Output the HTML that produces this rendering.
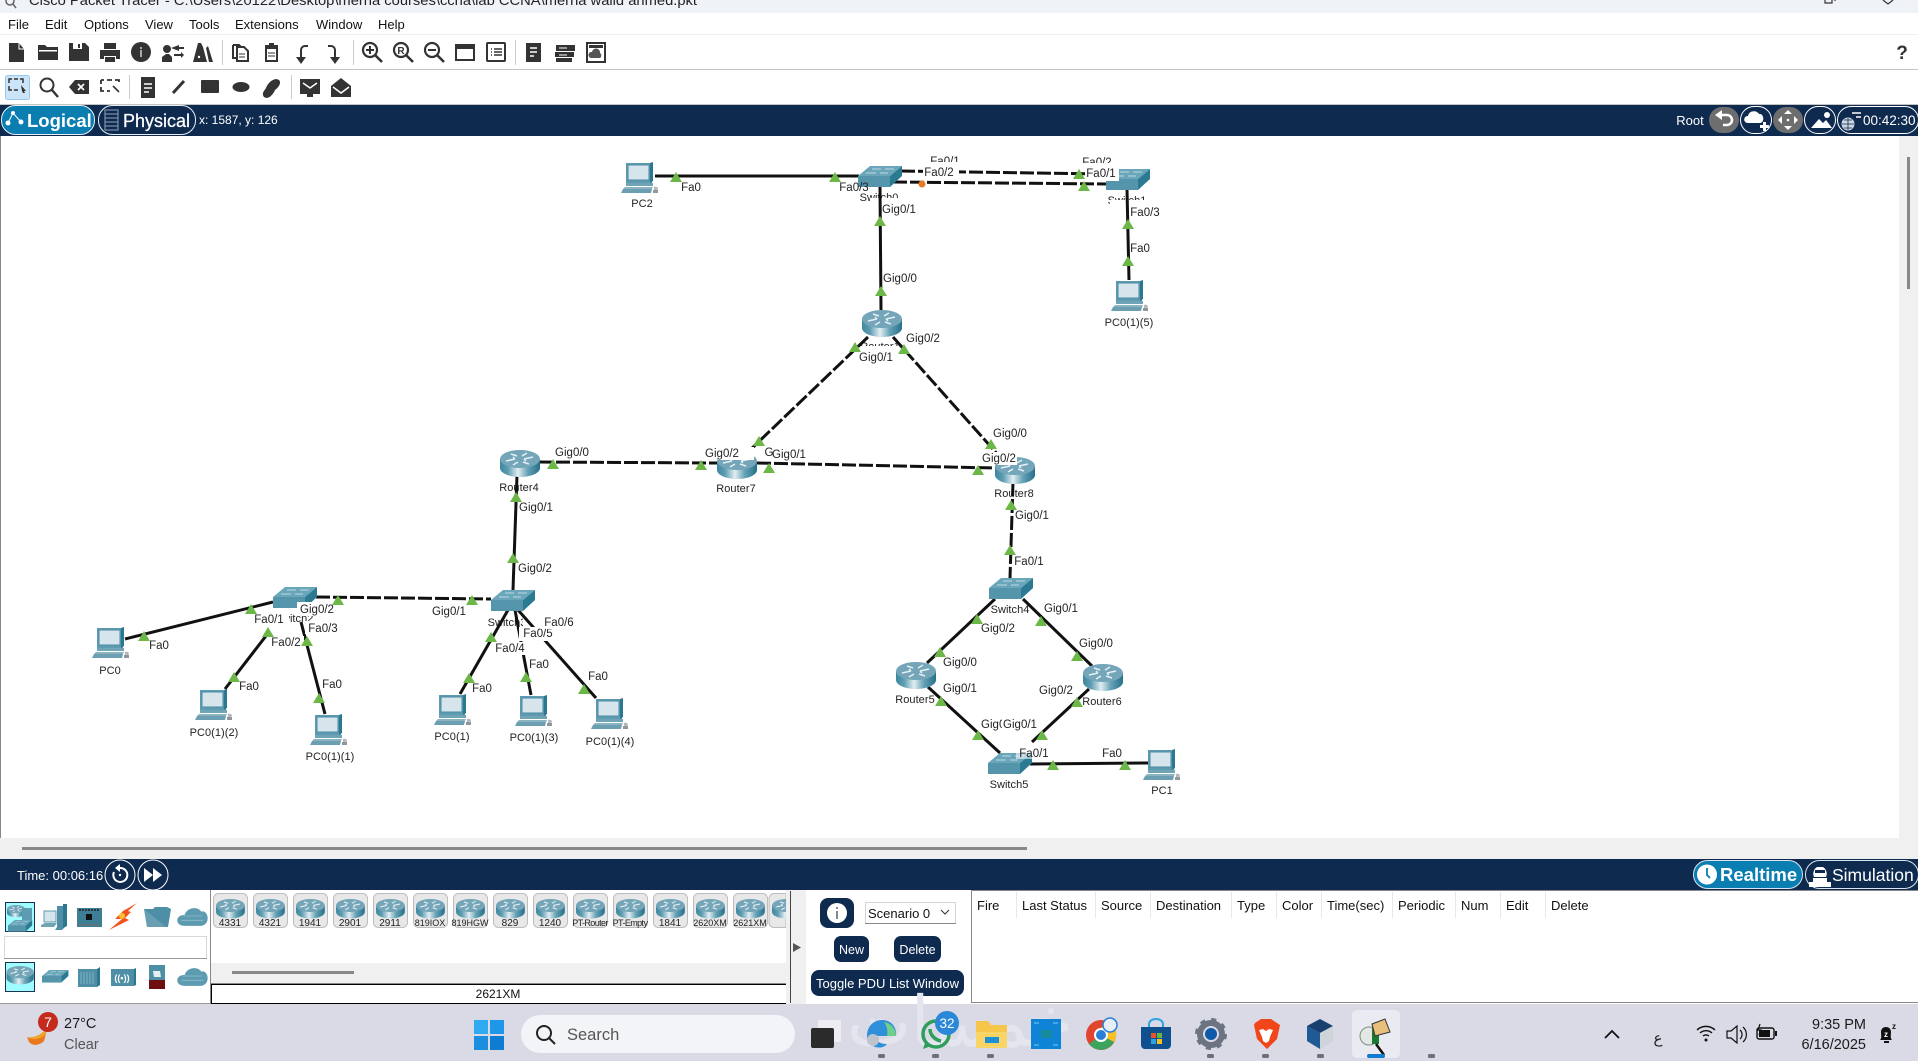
<!DOCTYPE html>
<html lang="en">
<head>
<meta charset="utf-8">
<title>Cisco Packet Tracer</title>
<style>
html,body{margin:0;padding:0;background:#fff;overflow:hidden;width:1918px;height:1061px}
svg{display:block;position:absolute;left:0;top:0}
svg svg{position:static}
text{font-family:"Liberation Sans","Noto Sans CJK SC",sans-serif}
.l{font-size:11.5px;fill:#222;text-anchor:middle}
.d{font-size:11px;fill:#222;text-anchor:middle;letter-spacing:.05px}
.m{font-size:13px;fill:#111}
.h{font-size:13px;fill:#111}
.c{font-size:10px;fill:#222;text-anchor:middle}
.n{fill:none;stroke:#111;stroke-width:3}
.k{fill:none;stroke:#111;stroke-width:3;stroke-dasharray:14 3}
.ic{fill:#333}
.ol{fill:none;stroke:#333;stroke-width:2}
</style>
</head>
<body>
<svg width="1918" height="1061" viewBox="0 0 1918 1061" xmlns="http://www.w3.org/2000/svg">
<defs>
<linearGradient id="rg" x1="0" x2="1" y1="0" y2="0">
<stop offset="0" stop-color="#3d87a0"/><stop offset=".2" stop-color="#5e9db2"/><stop offset=".45" stop-color="#e2eef2"/><stop offset=".7" stop-color="#64a0b4"/><stop offset="1" stop-color="#24718a"/>
</linearGradient>
<g id="r">
<path d="M0 9v9c0 5 9 9 20 9s20-4 20-9V9z" fill="url(#rg)"/>
<ellipse cx="20" cy="9" rx="20" ry="9" fill="#74a5b8"/>
<path d="M6 11l9-2M15 9l-2-2M33 7l-9 2M24 9l2 2M13 15l5-3M27 3l-5 3M11 4l6 2M29 14l-6-2" stroke="#e4f0f4" stroke-width="1.5" fill="none"/>
</g>
<g id="s">
<path d="M0 10L12 0H44L32 10z" fill="#6aa6ba"/>
<rect y="10" width="32" height="11" fill="#5595ac"/>
<path d="M32 10L44 0V10L32 21z" fill="#2a7a92"/>
<path d="M8 7h10M14 3h9M22 7h8M27 3h9" stroke="#bcd8e2" stroke-width="1" fill="none"/>
</g>
<g id="p">
<path d="M5 1h27l-1 20H5z" fill="#5e9bb0"/>
<path d="M29 1l3-1v19l-3 2z" fill="#2b7890"/>
<rect x="7" y="3" width="21" height="15" fill="#d6e4ec" stroke="#4b8ca3"/>
<path d="M5 21h27v3H5z" fill="#6fa3b6"/>
<path d="M4 25h28l-1 2H2z" fill="#8bb4c3"/>
<path d="M2 27h29l-1 4H0z" fill="#6c9fb2"/>
<path d="M33 25a3 3 0 0 1 4 1l-1 3h-3z" fill="#b4b9bc"/>
<path d="M32 28h5v3h-5z" fill="#8e979b"/>
</g>
<g id="tr"><path d="M-6 5L0 -5L6 5z" fill="#6db648"/></g>
<g id="cloud"><path d="M7 19c-9 0-9-10 0-10 2-7 12-8 15-3 7-2 9 13-1 13z" fill="#5d9bb1"/><path d="M5 10h18M4 14h20" stroke="#84b4c5"/></g>
</defs>

<!-- title bar -->
<rect width="1918" height="13" fill="#eff3f7"/>
<circle cx="10" cy="1" r="4" fill="none" stroke="#666" stroke-width="1.5"/><path d="M13 4l3 4" stroke="#666" stroke-width="1.5"/>
<text x="29" y="5" font-size="13.5" fill="#222" textLength="668" lengthAdjust="spacingAndGlyphs">Cisco Packet Tracer - C:\Users\20122\Desktop\merna courses\ccna\lab CCNA\merna walid ahmed.pkt</text>
<path d="M1825 0v3h7v-3M1835 0v1" fill="none" stroke="#333" stroke-width="1.2"/>
<path d="M1883 0l5 4 5-4" fill="none" stroke="#333" stroke-width="1.2"/>

<!-- menu -->
<g class="m">
<text class="m" x="8" y="29">File</text><text class="m" x="45" y="29">Edit</text><text class="m" x="84" y="29">Options</text><text class="m" x="145" y="29">View</text><text class="m" x="189" y="29">Tools</text><text class="m" x="235" y="29">Extensions</text><text class="m" x="316" y="29">Window</text><text class="m" x="378" y="29">Help</text>
</g>
<rect y="34" width="1918" height="1" fill="#f0f0f0"/>

<!-- toolbar 1 -->
<g>
<path class="ic" d="M9 43h10l5 6v13H9z"/><path d="M19 43v6h5" fill="none" stroke="#fff"/>
<path class="ic" d="M38 45h7l2 2h11v13H38z"/><rect x="39" y="50" width="18" height="1.5" fill="#fff"/>
<path class="ic" d="M69 43h16l4 4v14H69z"/><rect x="73" y="43" width="9" height="6" fill="#fff"/><rect x="78" y="44" width="2" height="4" fill="#333"/>
<path class="ic" d="M104 43h12v6h-12zM100 50h20v9h-4v-3h-12v3h-4zM105 57h10v5h-10z"/>
<circle class="ic" cx="141" cy="52" r="10"/><rect x="140" y="50" width="2" height="7" fill="#aaa"/><rect x="140" y="47" width="2" height="2" fill="#aaa"/>
<path class="ic" d="M167 45a4 4 0 1 1 0 8 4 4 0 0 1 0-8zM162 62v-5l4-3h3l3 3v5zM171 48l8-3v2h5v2h-5v2zM174 54h7v-2l3 3-3 3v-2h-7z"/>
<path class="ic" d="M198 43h3l2 4 4 15h-14zM208 46l5 16h-4l-3-14z"/><circle cx="199" cy="57" r="1.2" fill="#fff"/>
<rect x="222" y="40" width="1" height="25" fill="#ccc"/>
<path class="ol" d="M237 47h7l4 4v10h-11z" stroke-width="1.6"/><path class="ol" d="M233 45h6l2 2M233 45v13h4" stroke-width="1.6"/><path d="M239 54h6M239 57h6" stroke="#333"/>
<path class="ic" d="M265 45h4v-2h5v2h4v17h-13z"/><rect x="267" y="49" width="9" height="11" fill="#fff"/><path d="M268 53h7M268 56h7" stroke="#333"/>
<path class="ol" d="M301 60V50a4 4 0 0 1 4-4h3" stroke-width="2"/><path class="ic" d="M296 57h10l-5 7z"/>
<path class="ol" d="M335 60V50a4 4 0 0 0-4-4h-3" stroke-width="2"/><path class="ic" d="M330 57h10l-5 7z"/>
<rect x="353" y="40" width="1" height="25" fill="#ccc"/>
<g fill="none" stroke="#333"><circle cx="370" cy="50" r="7" stroke-width="2.2"/><path d="M375 55l7 7" stroke-width="2.6"/><path d="M366 50h8M370 46v8" stroke-width="2"/></g>
<g fill="none" stroke="#333"><circle cx="401" cy="50" r="7" stroke-width="2.2"/><path d="M406 55l7 7" stroke-width="2.6"/></g><text x="401" y="54" font-size="10" font-weight="bold" text-anchor="middle" fill="#333">R</text>
<g fill="none" stroke="#333"><circle cx="432" cy="50" r="7" stroke-width="2.2"/><path d="M437 55l7 7" stroke-width="2.6"/><path d="M428 50h8" stroke-width="2"/></g>
<rect x="456" y="45" width="18" height="15" fill="none" stroke="#333" stroke-width="2"/><rect x="456" y="45" width="18" height="4" fill="#333"/>
<rect x="487" y="43" width="18" height="18" rx="1" fill="none" stroke="#333" stroke-width="2"/><path d="M491 49h1M494 49h8M491 52h1M494 52h8M491 55h1M494 55h8" stroke="#333" stroke-width="1.5"/>
<rect x="515" y="40" width="1" height="25" fill="#ccc"/>
<rect x="526" y="43" width="15" height="19" fill="#333"/><path d="M530 48h7M530 52h7M530 56h4" stroke="#fff" stroke-width="1.5"/>
<path class="ic" d="M556 45h19v6h-19zM555 52h19v5h-19zM556 58h16v4h-16z"/><path d="M559 48h8M559 55h8" stroke="#fff"/>
<rect x="587" y="43" width="18" height="19" fill="none" stroke="#333" stroke-width="2"/><rect x="589" y="45" width="14" height="3" fill="#333"/><path d="M591 58a3 3 0 0 1 1-6 4 4 0 0 1 8 1 3 3 0 0 1 0 5z" fill="#555"/>
</g>
<text x="1902" y="59" font-size="19" font-weight="bold" text-anchor="middle" fill="#333">?</text>
<rect y="69" width="1918" height="1" fill="#c4c4c4"/>

<!-- toolbar 2 -->
<rect x="5.500" y="75.500" width="24" height="24" rx="2" fill="#cce4f7" stroke="#99c9ef"/>
<path d="M9 83v-4h3M14 79h4M20 79h3v4M9 86v4h3M14 90h4" fill="none" stroke="#333" stroke-width="1.5"/><path d="M21 85l5 6-2 0 1 2-2 0-1-2z" fill="#333"/>
<g fill="none" stroke="#333"><circle cx="47" cy="85" r="6.500" stroke-width="2"/><path d="M52 90l6 7" stroke-width="2.4"/></g>
<path class="ic" d="M69 87l6-7h14v14h-14z"/><path d="M78 84l6 6M84 84l-6 6" stroke="#fff" stroke-width="1.6"/>
<path d="M101 80h3M107 80h5M115 80h4v2M101 80v4M101 87v4h3M107 91h3" fill="none" stroke="#333" stroke-width="1.8"/><path d="M113 86l6 6" stroke="#333" stroke-width="1.6"/>
<rect x="129" y="75" width="1" height="24" fill="#ccc"/>
<rect x="141" y="77" width="14" height="21" fill="#333"/><path d="M144 84h8M144 88h8M144 92h5" stroke="#fff" stroke-width="1.4"/>
<path d="M173 93l11-12" stroke="#333" stroke-width="3"/>
<rect x="201" y="80" width="18" height="13" rx="1" fill="#333"/>
<ellipse cx="241" cy="87" rx="8.500" ry="5" fill="#333"/>
<path d="M264 97c-3-4 1-7 2-9 2-6 9-11 13-8 3 3-1 8-4 10-2 5-7 10-11 7z" fill="#333"/>
<rect x="291" y="75" width="1" height="24" fill="#ccc"/>
<path class="ic" d="M300 79h20v15h-7v3h-6v-3h-7z"/><path d="M303 83l7 5 7-5" fill="none" stroke="#fff" stroke-width="1.5"/>
<path class="ic" d="M331 86l10-8 10 8v11h-20z"/><path d="M333 87l8 6 8-6" fill="none" stroke="#fff" stroke-width="1.5"/>
<rect y="104" width="1918" height="1" fill="#c4c4c4"/>

<!-- navy bar top -->
<rect y="105" width="1918" height="31" fill="#0f2a4f"/>
<rect x="1.500" y="105.500" width="93" height="29" rx="14" fill="#0a7db1" stroke="#e8f0f6"/>
<circle cx="8" cy="123" r="2.500" fill="#fff"/><circle cx="13" cy="113" r="2" fill="#fff"/><circle cx="21" cy="122" r="2.500" fill="#fff"/><path d="M8 123l5-10 8 9" fill="none" stroke="#fff"/>
<text x="27" y="127" font-size="18.500" font-weight="bold" fill="#fff">Logical</text>
<rect x="98.500" y="105.500" width="97" height="29" rx="14" fill="#0f2a4f" stroke="#e8f0f6"/>
<rect x="105" y="110" width="13" height="20" fill="none" stroke="#8fa3bc"/><path d="M105 114h13M105 118h13M105 122h13M105 126h13" stroke="#8fa3bc"/>
<text x="123" y="127" font-size="18" fill="#fff" stroke="#fff" stroke-width=".25">Physical</text>
<text x="199" y="124" font-size="12" fill="#fff">x: 1587, y: 126</text>
<text x="1690" y="125" font-size="13" fill="#fff" text-anchor="middle">Root</text>
<rect x="1709" y="107" width="30" height="26" rx="13" fill="#6e6e6e"/>
<path d="M1720 115h7a5 5 0 0 1 0 10h-4" fill="none" stroke="#fff" stroke-width="2.500"/><path d="M1722 110v10l-7-5z" fill="#fff"/>
<rect x="1740.500" y="106.500" width="31" height="27" rx="13.500" fill="none" stroke="#fff"/>
<path d="M1748 123c-5 0-5-7 0-7 1-6 9-6 11-2 5-1 6 9 1 9z" fill="#fff"/><path d="M1763 122h3v3h3v3h-3v3h-3v-3h-3v-3h3z" fill="#fff"/>
<rect x="1773" y="107" width="30" height="26" rx="13" fill="#6e6e6e"/>
<path d="M1788 110l4 4h-8zM1788 130l4-4h-8zM1778 120l4-4v8zM1798 120l-4-4v8z" fill="#fff"/><circle cx="1788" cy="120" r="1.300" fill="#fff"/>
<rect x="1804.500" y="106.500" width="31" height="27" rx="13.500" fill="none" stroke="#fff"/>
<path d="M1811 128l8-9 4 4 3-3 6 8z" fill="#fff"/><circle cx="1827" cy="115" r="3" fill="#fff"/>
<rect x="1837.500" y="106.500" width="81" height="27" rx="13.500" fill="none" stroke="#fff"/>
<circle cx="1848" cy="124" r="6.500" fill="#cdd6e0"/><path d="M1842 124h12M1848 118v12M1844 120h8M1844 128h8" stroke="#0f2a4f" stroke-width=".8"/>
<path d="M1852 113h9M1856 117h5" stroke="#fff" stroke-width="1.500"/>
<text x="1863" y="125" font-size="13.500" fill="#fff">00:42:30</text>

<!-- canvas -->
<rect x="0" y="136" width="1899" height="702" fill="#fff"/>
<rect x="0" y="136" width="1" height="704" fill="#888"/>
<rect x="1899" y="136" width="19" height="723" fill="#f0f0f0"/>
<rect x="1907" y="157" width="3" height="132" fill="#888"/>
<rect x="0" y="838" width="1899" height="21" fill="#f0f0f0"/>
<rect x="22" y="847" width="1005" height="3" fill="#888"/>

<!-- device labels -->
<g class="d">
<text class="d" x="642" y="207">PC2</text>
<text class="d" x="879" y="201">Switch0</text>
<text class="d" x="1127" y="204">Switch1</text>
<text class="d" x="1129" y="326">PC0(1)(5)</text>
<text class="d" x="880" y="350">Router1</text>
<text class="d" x="519" y="491">Router4</text>
<text class="d" x="736" y="492">Router7</text>
<text class="d" x="1014" y="497">Router8</text>
<text class="d" x="1010" y="613">Switch4</text>
<text class="d" x="915" y="703">Router5</text>
<text class="d" x="1102" y="705">Router6</text>
<text class="d" x="1009" y="788">Switch5</text>
<text class="d" x="1162" y="794">PC1</text>
<text class="d" x="110" y="674">PC0</text>
<text class="d" x="214" y="736">PC0(1)(2)</text>
<text class="d" x="330" y="760">PC0(1)(1)</text>
<text class="d" x="452" y="740">PC0(1)</text>
<text class="d" x="534" y="741">PC0(1)(3)</text>
<text class="d" x="610" y="745">PC0(1)(4)</text>
<text class="d" x="294" y="622">Switch2</text>
<svg x="485" y="610" width="38" height="20"><text class="d" x="22" y="16">Switch3</text></svg>
</g>
<rect x="870" y="198" width="62" height="19" fill="#fff"/>
<rect x="1110" y="200" width="40" height="15" fill="#fff"/>
<rect x="858" y="346" width="42" height="20" fill="#fff"/>

<!-- links -->
<line class="n" x1="655" y1="176" x2="859" y2="176"/>
<line class="k" x1="901" y1="171" x2="1106" y2="174"/>
<line class="k" x1="893" y1="182" x2="1107" y2="184"/>
<line class="n" x1="880" y1="187" x2="881" y2="310"/>
<line class="n" x1="1127" y1="189" x2="1129" y2="280"/>
<line class="k" x1="868" y1="337" x2="748" y2="452" stroke-dasharray="12 4"/>
<line class="k" x1="893" y1="337" x2="1000" y2="457" stroke-dasharray="12 4"/>
<line class="k" x1="539" y1="462" x2="717" y2="463"/>
<line class="k" x1="757" y1="463" x2="995" y2="468"/>
<line class="n" x1="517" y1="475" x2="513" y2="590"/>
<line class="k" x1="1013" y1="482" x2="1010" y2="578" stroke-dasharray="18 3"/>
<line class="n" x1="125" y1="639" x2="273" y2="602"/>
<line class="n" x1="225" y1="689" x2="269" y2="632"/>
<line class="n" x1="325" y1="714" x2="301" y2="622"/>
<line class="k" x1="316" y1="597" x2="491" y2="599"/>
<line class="n" x1="460" y1="694" x2="508" y2="610"/>
<line class="n" x1="531" y1="695" x2="515" y2="610"/>
<line class="n" x1="596" y1="698" x2="518" y2="610"/>
<line class="n" x1="995" y1="599" x2="927" y2="663"/>
<line class="n" x1="1023" y1="599" x2="1092" y2="666"/>
<line class="n" x1="928" y1="687" x2="1000" y2="753"/>
<line class="n" x1="1089" y1="689" x2="1032" y2="742"/>
<line class="n" x1="1030" y1="764" x2="1148" y2="763"/>

<!-- devices -->
<use href="#p" x="621" y="162"/>
<use href="#s" x="858" y="166"/>
<use href="#s" x="1106" y="169"/>
<use href="#p" x="1111" y="280"/>
<use href="#r" x="862" y="310"/>
<use href="#r" x="500" y="450"/>
<use href="#r" x="717" y="452"/>
<use href="#r" x="995" y="457"/>
<use href="#s" x="491" y="590"/>
<use href="#s" x="273" y="587"/>
<use href="#s" x="989" y="578"/>
<use href="#r" x="896" y="662"/>
<use href="#r" x="1083" y="664"/>
<use href="#s" x="988" y="753"/>
<use href="#p" x="1143" y="749"/>
<use href="#p" x="92" y="627"/>
<use href="#p" x="195" y="689"/>
<use href="#p" x="310" y="714"/>
<use href="#p" x="434" y="694"/>
<use href="#p" x="515" y="695"/>
<use href="#p" x="591" y="698"/>

<!-- white label backgrounds -->
<g fill="#fff">
<rect x="923" y="162" width="36" height="17"/>
<rect x="1085" y="163" width="34" height="18"/>
<rect x="718" y="447" width="36" height="13"/>
<rect x="981" y="452" width="36" height="13"/>
<rect x="252" y="612" width="37" height="14"/>
<rect x="297" y="602" width="37" height="14"/>
<rect x="305" y="621" width="36" height="13"/>
<rect x="268" y="636" width="36" height="12"/>
<rect x="519" y="627" width="36" height="14"/>
<rect x="540" y="616" width="38" height="13"/>
<rect x="492" y="642" width="36" height="13"/>
<rect x="1016" y="747" width="36" height="12" opacity=".55"/>
<rect x="1098" y="757" width="26" height="3" opacity=".6"/>
</g>

<!-- link lights -->
<g>
<use href="#tr" x="676" y="177"/><use href="#tr" x="835" y="177"/>
<use href="#tr" x="1079" y="174"/><use href="#tr" x="1084" y="186"/>
<use href="#tr" x="880" y="221"/><use href="#tr" x="881" y="291"/>
<use href="#tr" x="1128" y="224"/><use href="#tr" x="1128" y="261"/>
<use href="#tr" x="855" y="347"/><use href="#tr" x="904" y="349"/>
<use href="#tr" x="553" y="464"/><use href="#tr" x="701" y="465"/>
<use href="#tr" x="769" y="468"/><use href="#tr" x="978" y="470"/>
<use href="#tr" x="991" y="444"/><use href="#tr" x="759" y="441"/>
<use href="#tr" x="516" y="497"/><use href="#tr" x="513" y="558"/>
<use href="#tr" x="1011" y="505"/><use href="#tr" x="1010" y="550"/>
<use href="#tr" x="144" y="636"/><use href="#tr" x="251" y="609"/>
<use href="#tr" x="234" y="677"/><use href="#tr" x="268" y="632"/>
<use href="#tr" x="307" y="641"/><use href="#tr" x="319" y="698"/>
<use href="#tr" x="338" y="600"/><use href="#tr" x="472" y="600"/>
<use href="#tr" x="491" y="637"/><use href="#tr" x="469" y="678"/>
<use href="#tr" x="526" y="677"/><use href="#tr" x="584" y="689"/>
<use href="#tr" x="977" y="619"/><use href="#tr" x="940" y="652"/>
<use href="#tr" x="1041" y="621"/><use href="#tr" x="1077" y="656"/>
<use href="#tr" x="941" y="701"/><use href="#tr" x="978" y="735"/>
<use href="#tr" x="1077" y="702"/><use href="#tr" x="1042" y="735"/>
<use href="#tr" x="1053" y="765"/><use href="#tr" x="1125" y="765"/>
</g>
<circle cx="922" cy="184" r="3.500" fill="#e97a22"/>

<!-- port labels -->
<g>
<text class="l" x="691" y="191">Fa0</text>
<text class="l" x="854" y="191">Fa0/3</text>
<svg x="925" y="150" width="40" height="12"><text class="l" x="20" y="15">Fa0/1</text></svg>
<text class="l" x="939" y="176">Fa0/2</text>
<svg x="1077" y="152" width="40" height="11"><text class="l" x="20" y="14">Fa0/2</text></svg>
<text class="l" x="1101" y="177">Fa0/1</text>
<text class="l" x="899" y="213">Gig0/1</text>
<text class="l" x="900" y="282">Gig0/0</text>
<text class="l" x="1145" y="216">Fa0/3</text>
<text class="l" x="1140" y="252">Fa0</text>
<text class="l" x="923" y="342">Gig0/2</text>
<text class="l" x="876" y="361">Gig0/1</text>
<text class="l" x="572" y="456">Gig0/0</text>
<text class="l" x="722" y="457">Gig0/2</text>
<text class="l" x="769" y="456">G</text>
<text class="l" x="789" y="458">Gig0/1</text>
<text class="l" x="1010" y="437">Gig0/0</text>
<text class="l" x="999" y="462">Gig0/2</text>
<text class="l" x="536" y="511">Gig0/1</text>
<text class="l" x="535" y="572">Gig0/2</text>
<text class="l" x="1032" y="519">Gig0/1</text>
<text class="l" x="1029" y="565">Fa0/1</text>
<text class="l" x="159" y="649">Fa0</text>
<text class="l" x="269" y="623">Fa0/1</text>
<text class="l" x="317" y="613">Gig0/2</text>
<text class="l" x="323" y="632">Fa0/3</text>
<text class="l" x="286" y="646">Fa0/2</text>
<text class="l" x="249" y="690">Fa0</text>
<text class="l" x="332" y="688">Fa0</text>
<text class="l" x="449" y="615">Gig0/1</text>
<text class="l" x="538" y="637">Fa0/5</text>
<rect x="540" y="616" width="38" height="13" fill="#fff"/>
<text class="l" x="559" y="626">Fa0/6</text>
<text class="l" x="510" y="652">Fa0/4</text>
<text class="l" x="482" y="692">Fa0</text>
<text class="l" x="539" y="668">Fa0</text>
<text class="l" x="598" y="680">Fa0</text>
<text class="l" x="998" y="632">Gig0/2</text>
<text class="l" x="960" y="666">Gig0/0</text>
<text class="l" x="960" y="692">Gig0/1</text>
<text class="l" x="1061" y="612">Gig0/1</text>
<text class="l" x="1096" y="647">Gig0/0</text>
<text class="l" x="1056" y="694">Gig0/2</text>
<text class="l" x="998" y="728">Gig0/1</text>
<rect x="1002" y="716" width="36" height="16" fill="#fff"/>
<text class="l" x="1020" y="728">Gig0/1</text>
<text class="l" x="1034" y="757">Fa0/1</text>
<text class="l" x="1112" y="757">Fa0</text>
</g>

<!-- navy bar bottom -->
<rect y="859" width="1918" height="31" fill="#0f2a4f"/>
<text x="17" y="880" font-size="13" fill="#fff">Time: 00:06:16</text>
<circle cx="120" cy="875" r="15" fill="none" stroke="#fff"/>
<path d="M114 872a7 7 0 1 0 6-4h-3" fill="none" stroke="#fff" stroke-width="2"/><path d="M120 864v8l-5-4z" fill="#fff"/><circle cx="120" cy="875" r="1.200" fill="#fff"/>
<circle cx="153" cy="875" r="15" fill="none" stroke="#fff"/>
<path d="M144 868l9 7-9 7zM153 868l9 7-9 7z" fill="#fff"/>
<rect x="1693.500" y="860.500" width="109" height="28" rx="14" fill="#0a7db1" stroke="#d8e4ee"/>
<circle cx="1707" cy="874.500" r="10" fill="#fff"/><path d="M1707 868v7l3 3" fill="none" stroke="#0a7db1" stroke-width="1.800"/>
<text x="1720" y="881" font-size="18.500" font-weight="bold" fill="#fff">Realtime</text>
<rect x="1805.500" y="860.500" width="113" height="28" rx="14" fill="#0f2a4f" stroke="#d8e4ee"/>
<path d="M1814 877a8 8 0 0 1 3-10h6a8 8 0 0 1 3 10z" fill="#fff"/><rect x="1815" y="870" width="10" height="3" fill="#0f2a4f"/><path d="M1809 882h4v-4h14v4h4v5h-22z" fill="#fff"/>
<text x="1832" y="881" font-size="17.500" fill="#fff">Simulation</text>

<!-- bottom panel -->
<rect y="890" width="1918" height="114" fill="#fff"/>
<rect x="5.500" y="902.500" width="29" height="29" fill="#9ffcff" stroke="#1a3350"/>
<use href="#r" transform="translate(7 905) scale(.45)"/>
<use href="#s" transform="translate(8 920) scale(.55)"/>
<rect x="22" y="908" width="10" height="12" fill="#5d9bb1"/>
<g transform="translate(41 903)"><path d="M16 3h9v20l-4 4h-7l2-3z" fill="#4e8fa7"/><path d="M22 1l4 0v22l-4 2z" fill="#2b7890"/><rect x="3" y="8" width="12" height="11" fill="#d6e4ec" stroke="#5e9bb0"/><path d="M0 22l4-2h12l-3 4H0z" fill="#6fa3b6"/></g>
<rect x="77" y="908" width="25" height="19" fill="#3e7f96"/><rect x="86" y="914" width="6" height="6" fill="#111"/><path d="M79 910h21" stroke="#222" stroke-width="1.500" stroke-dasharray="2 1"/><path d="M79 925h21" stroke="#b4553a" stroke-dasharray="2 2"/>
<path d="M137 903l-14 8-8 8 7 0-13 11 20-10 -4-2 6-6-3-1z" fill="#f4511e"/><circle cx="122" cy="916" r="3" fill="#f7c12d"/>
<path d="M144 909h9l2-2h12l4 2-3 18h-21z" fill="#4e8fa7"/><path d="M144 909l22 18h-19z" fill="#7aaabb" opacity=".6"/>
<use href="#cloud" transform="translate(177 905) scale(1.100)"/>
<rect x="4.500" y="936.500" width="202" height="22" fill="#fff" stroke="#d8d8d8"/>
<rect x="4" y="958" width="203" height="1" fill="#999"/>
<rect x="5.500" y="962.500" width="29" height="29" fill="#9ffcff" stroke="#1a3350"/>
<use href="#r" transform="translate(6.500 966) scale(.68)"/>
<use href="#s" transform="translate(42 970) scale(.6)"/>
<rect x="78" y="969" width="19" height="18" fill="#4e8fa7"/><path d="M97 969l3-2v18l-3 2z" fill="#2b7890"/><path d="M81 972v12M84 972v12M87 972v12M90 972v12M93 972v12" stroke="#7fb0c1"/>
<rect x="111" y="969" width="23" height="17" fill="#4e8fa7"/><path d="M134 969l2-1v17l-2 1z" fill="#2b7890"/><text x="122" y="981" font-size="9" fill="#fff" text-anchor="middle" font-weight="bold">((•))</text>
<rect x="149" y="965" width="16" height="15" fill="#4e8fa7"/><rect x="149" y="980" width="16" height="9" fill="#6d0f10"/><path d="M153 971l7 0 1 6h-7z" fill="#e6eef2"/>
<use href="#cloud" transform="translate(177 965) scale(1.100)"/>
<rect x="0" y="1003" width="210" height="1" fill="#999"/>

<rect x="210" y="890" width="1" height="114" fill="#888"/>
<rect x="211" y="963" width="575" height="20" fill="#f0f0f0"/>
<rect x="232" y="971" width="122" height="3" fill="#888"/>
<rect x="211" y="983" width="575" height="1" fill="#888"/>
<rect x="211.500" y="984.500" width="575" height="19" fill="#fff" stroke="#000"/>
<text x="498" y="998" font-size="12" fill="#111" text-anchor="middle">2621XM</text>

<g fill="#e8e8e8" stroke="#bdbdbd">
<rect x="213.500" y="893.500" width="34" height="34" rx="5"/><rect x="253.500" y="893.500" width="34" height="34" rx="5"/><rect x="293.500" y="893.500" width="34" height="34" rx="5"/><rect x="333.500" y="893.500" width="34" height="34" rx="5"/><rect x="373.500" y="893.500" width="34" height="34" rx="5"/><rect x="413.500" y="893.500" width="34" height="34" rx="5"/><rect x="453.500" y="893.500" width="34" height="34" rx="5"/><rect x="493.500" y="893.500" width="34" height="34" rx="5"/><rect x="533.500" y="893.500" width="34" height="34" rx="5"/><rect x="573.500" y="893.500" width="34" height="34" rx="5"/><rect x="613.500" y="893.500" width="34" height="34" rx="5"/><rect x="653.500" y="893.500" width="34" height="34" rx="5"/><rect x="693.500" y="893.500" width="34" height="34" rx="5"/><rect x="733.500" y="893.500" width="34" height="34" rx="5"/><path d="M786 893.500h-12a5 5 0 0 0-5 5v24a5 5 0 0 0 5 5h12z" />
</g>
<g>
<use href="#r" transform="translate(216 899) scale(.72)"/><use href="#r" transform="translate(256 899) scale(.72)"/><use href="#r" transform="translate(296 899) scale(.72)"/><use href="#r" transform="translate(336 899) scale(.72)"/><use href="#r" transform="translate(376 899) scale(.72)"/><use href="#r" transform="translate(416 899) scale(.72)"/><use href="#r" transform="translate(456 899) scale(.72)"/><use href="#r" transform="translate(496 899) scale(.72)"/><use href="#r" transform="translate(536 899) scale(.72)"/><use href="#r" transform="translate(576 899) scale(.72)"/><use href="#r" transform="translate(616 899) scale(.72)"/><use href="#r" transform="translate(656 899) scale(.72)"/><use href="#r" transform="translate(696 899) scale(.72)"/><use href="#r" transform="translate(736 899) scale(.72)"/>
<svg x="770" y="899" width="16" height="20"><use href="#r" transform="translate(2 0) scale(.72)"/></svg>
</g>
<g>
<text class="c" x="230" y="926">4331</text><text class="c" x="270" y="926">4321</text><text class="c" x="310" y="926">1941</text><text class="c" x="350" y="926">2901</text><text class="c" x="390" y="926">2911</text><text class="c" x="430" y="926" style="font-size:9px">819IOX</text><text class="c" x="470" y="926" style="font-size:9px">819HGW</text><text class="c" x="510" y="926">829</text><text class="c" x="550" y="926">1240</text><text class="c" x="590" y="926" style="font-size:9px;letter-spacing:-.6px">PT-Router</text><text class="c" x="630" y="926" style="font-size:9px;letter-spacing:-.6px">PT-Empty</text><text class="c" x="670" y="926">1841</text><text class="c" x="710" y="926" style="font-size:9px">2620XM</text><text class="c" x="750" y="926" style="font-size:9px">2621XM</text>
</g>

<!-- splitter -->
<rect x="786" y="890" width="20" height="114" fill="#f0f0f0"/>
<rect x="790" y="891" width="1" height="112" fill="#444"/>
<path d="M793 943l8 4.500-8 4.500z" fill="#555"/>

<!-- middle -->
<rect x="806" y="890" width="165" height="114" fill="#fff"/>
<rect x="820" y="898" width="34" height="30" rx="8" fill="#0f2a4f"/>
<circle cx="837" cy="913" r="10" fill="#fff"/><rect x="836" y="911" width="2" height="8" fill="#888"/><rect x="836" y="907" width="2" height="2" fill="#888"/>
<rect x="865.500" y="902.500" width="90" height="21" fill="#fff" stroke="#d5d5d5"/><rect x="865" y="923" width="91" height="1" fill="#888"/>
<text x="868" y="918" font-size="13" fill="#111">Scenario 0</text>
<path d="M941 910l4 4 4-4" fill="none" stroke="#333"/>
<rect x="834" y="936" width="35" height="26" rx="7" fill="#0f2a4f"/><text x="851.500" y="954" font-size="12.500" fill="#fff" text-anchor="middle">New</text>
<rect x="894" y="936" width="47" height="26" rx="7" fill="#0f2a4f"/><text x="917.500" y="954" font-size="12.500" fill="#fff" text-anchor="middle">Delete</text>
<rect x="811" y="970" width="153" height="26" rx="8" fill="#0f2a4f"/><text x="887.500" y="988" font-size="13" fill="#fff" text-anchor="middle" textLength="143" lengthAdjust="spacingAndGlyphs">Toggle PDU List Window</text>

<!-- PDU table -->
<rect x="971.500" y="890.500" width="947" height="112" fill="#fff" stroke="#888"/>
<g fill="#e8e8e8">
<rect x="1016" y="892" width="1" height="26"/><rect x="1095" y="892" width="1" height="26"/><rect x="1150" y="892" width="1" height="26"/><rect x="1231" y="892" width="1" height="26"/><rect x="1276" y="892" width="1" height="26"/><rect x="1321" y="892" width="1" height="26"/><rect x="1392" y="892" width="1" height="26"/><rect x="1455" y="892" width="1" height="26"/><rect x="1500" y="892" width="1" height="26"/><rect x="1545" y="892" width="1" height="26"/>
</g>
<g>
<text class="h" x="977" y="910">Fire</text><text class="h" x="1022" y="910">Last Status</text><text class="h" x="1101" y="910">Source</text><text class="h" x="1156" y="910">Destination</text><text class="h" x="1237" y="910">Type</text><text class="h" x="1282" y="910">Color</text><text class="h" x="1327" y="910">Time(sec)</text><text class="h" x="1398" y="910">Periodic</text><text class="h" x="1461" y="910">Num</text><text class="h" x="1506" y="910">Edit</text><text class="h" x="1551" y="910">Delete</text>
</g>

<!-- taskbar -->
<rect y="1004" width="1918" height="57" fill="#d9dae6"/>
<path d="M47 1028c0 9-6 14-11 13-4 0-6-2-8-4 6 1 13-2 19-9z" fill="#f0a22c"/><path d="M27 1037c6 4 14 2 19-3l-2 7c-5 5-12 5-15 1z" fill="#e8791c"/>
<circle cx="48" cy="1022" r="10" fill="#c42b1c"/><text x="48" y="1027" font-size="14" fill="#fff" text-anchor="middle">7</text>
<text x="64" y="1028" font-size="14.500" fill="#1a1a1a">27°C</text>
<text x="64" y="1049" font-size="14.500" fill="#555">Clear</text>
<g>
<rect x="474" y="1020" width="14" height="14" fill="#2eaaf0"/><rect x="490" y="1020" width="14" height="14" fill="#1e97e8"/><rect x="474" y="1036" width="14" height="14" fill="#1c8ee0"/><rect x="490" y="1036" width="14" height="14" fill="#0f7cd4"/>
</g>
<rect x="521" y="1015" width="274" height="38" rx="19" fill="#f3f4f7"/>
<circle cx="544" cy="1033" r="7" fill="none" stroke="#222" stroke-width="2"/><path d="M549 1038l6 6" stroke="#222" stroke-width="2"/>
<text x="567" y="1040" font-size="16.500" fill="#555">Search</text>

<text x="960" y="1046" font-size="70" fill="#e4e5ee" text-anchor="middle" font-family="'DejaVu Sans',sans-serif" textLength="226" lengthAdjust="spacingAndGlyphs">خمسات</text>
<rect x="818" y="1020" width="23" height="22" rx="2" fill="#ededf3"/><rect x="811" y="1028" width="23" height="20" rx="2" fill="#2b2b2b"/>
<!-- edge -->
<path d="M867 1036c0-10 7-16 15-16 9 0 15 7 14 16h-21c0 4 4 8 12 8-3 4-8 4-12 3-5-2-8-6-8-11z" fill="#2f8fd8"/><path d="M884 1022c7 1 12 7 12 14h-9c1-5 0-10-3-14z" fill="#6fcf8a"/><circle cx="873" cy="1040" r="6" fill="#bfc3cc"/>
<!-- whatsapp -->
<circle cx="936" cy="1034" r="13" fill="none" stroke="#2e9e5b" stroke-width="3.500"/><path d="M923 1049l3-9 5 6z" fill="#2e9e5b"/><path d="M930 1029c0 6 5 11 11 12" fill="none" stroke="#2e9e5b" stroke-width="3.500"/>
<circle cx="947" cy="1023" r="12" fill="#2b88d8"/><text x="947" y="1028" font-size="13.500" fill="#fff" text-anchor="middle">32</text>
<!-- folder -->
<path d="M976 1021h12l3 4h16v23h-31z" fill="#f6c64a"/><rect x="976" y="1032" width="31" height="16" fill="#f9d467"/><rect x="985" y="1037" width="14" height="6" fill="#1d8fd6"/>
<!-- video -->
<rect x="1031" y="1019" width="30" height="30" fill="#0f83d6"/><rect x="1041" y="1030" width="11" height="8" fill="#168a9c"/><path d="M1034 1023h5M1053 1023h5M1034 1045h5M1053 1045h5" stroke="#7cc8f0"/>
<!-- chrome -->
<circle cx="1101" cy="1035" r="15" fill="#e0452f"/><path d="M1101 1035l13 7a15 15 0 0 1-25 2z" fill="#3ba55d"/><path d="M1101 1035l13 7a15 15 0 0 0 1-14l-14-1z" fill="#f6c026"/><circle cx="1101" cy="1035" r="7" fill="#fff"/><circle cx="1101" cy="1035" r="5" fill="#2a7fd8"/><circle cx="1110" cy="1025" r="7" fill="#e8eef6" stroke="#2a7fd8" stroke-width="1.500"/>
<!-- store -->
<path d="M1141 1027h30v18a4 4 0 0 1-4 4h-22a4 4 0 0 1-4-4z" fill="#11508f"/><path d="M1149 1027v-3a7 5 0 0 1 14 0v3" fill="none" stroke="#2ca6e0" stroke-width="2"/><rect x="1151" y="1033" width="5" height="5" fill="#e8532c"/><rect x="1157" y="1033" width="5" height="5" fill="#6cb33f"/><rect x="1151" y="1039" width="5" height="5" fill="#2ca6e0"/><rect x="1157" y="1039" width="5" height="5" fill="#f6c026"/>
<!-- gear -->
<circle cx="1211" cy="1034" r="11" fill="none" stroke="#6b7480" stroke-width="6"/><circle cx="1211" cy="1034" r="14" fill="none" stroke="#6b7480" stroke-width="4" stroke-dasharray="5 6"/><circle cx="1211" cy="1034" r="6" fill="#0f5aa8"/>
<!-- brave -->
<path d="M1255 1023l6-4h10l6 4 3 2-3 14-10 10-10-10-3-14z" fill="#f0461a"/><path d="M1259 1030l4-1 3 2 3-2 4 1-3 7-1 4-3 2-3-2-1-4z" fill="#fff"/>
<!-- vbox -->
<path d="M1320 1019l13 7v15l-13 8-13-8v-15z" fill="#aeb6bf"/><path d="M1320 1019l13 7-13 7-13-7z" fill="#17406e"/><path d="M1307 1026l13 7v16l-13-8z" fill="#1f5a94"/><path d="M1333 1026l-13 7v16l13-8z" fill="#cfd4da"/>
<!-- PT -->
<rect x="1352" y="1010" width="48" height="48" rx="5" fill="#e9eaf2"/>
<circle cx="1369" cy="1036" r="9" fill="#e4e8e4" stroke="#7d8f7d"/><path d="M1372 1028h7v16h-7z" fill="#1d7a33"/><path d="M1372 1024l13-5 5 13-15 4z" fill="#e8bf7a" stroke="#333"/><path d="M1376 1044l8 11" stroke="#111" stroke-width="2.500"/>
<rect x="1367" y="1054" width="18" height="4" rx="2" fill="#0f7cd4"/>
<g fill="#6d6e78">
<rect x="878" y="1054" width="7" height="4" rx="1.500"/><rect x="932" y="1054" width="7" height="4" rx="1.500"/><rect x="987" y="1054" width="7" height="4" rx="1.500"/><rect x="1207" y="1054" width="7" height="4" rx="1.500"/><rect x="1262" y="1054" width="7" height="4" rx="1.500"/><rect x="1317" y="1054" width="7" height="4" rx="1.500"/><rect x="1428" y="1054" width="7" height="4" rx="1.500"/>
</g>
<!-- tray -->
<path d="M1605 1038l7-7 7 7" fill="none" stroke="#111" stroke-width="1.800"/>
<text x="1658" y="1043" font-size="15" fill="#222" text-anchor="middle" font-family="'DejaVu Sans',sans-serif">ع</text>
<path d="M1697 1030a13 13 0 0 1 18 0M1700 1033a9 9 0 0 1 12 0M1703 1036a5 5 0 0 1 6 0" fill="none" stroke="#111" stroke-width="1.400"/><circle cx="1706" cy="1040" r="1.500" fill="#111"/>
<path d="M1727 1031h4l6-5v17l-6-5h-4z" fill="none" stroke="#111" stroke-width="1.200"/><path d="M1740 1030a6 6 0 0 1 0 9M1743 1027a10 10 0 0 1 0 15" fill="none" stroke="#111" stroke-width="1.200"/>
<rect x="1757" y="1028" width="17" height="11" rx="2" fill="none" stroke="#111" stroke-width="1.400"/><rect x="1759" y="1030" width="11" height="7" fill="#111"/><rect x="1775" y="1031" width="2" height="5" fill="#111"/><path d="M1760 1024l-2 6h3l-2 5" fill="none" stroke="#111" stroke-width="1.200"/>
<text x="1866" y="1029" font-size="14.500" fill="#1a1a1a" text-anchor="end">9:35 PM</text>
<text x="1866" y="1049" font-size="14.500" fill="#1a1a1a" text-anchor="end">6/16/2025</text>
<path d="M1880 1040c2-2 1-5 1-8 0-3 2-5 5-5s5 2 5 5c0 3-1 6 1 8z" fill="#111"/><rect x="1884" y="1041" width="5" height="2" fill="#111"/><text x="1886" y="1037" font-size="8" font-weight="bold" fill="#fff" text-anchor="middle">z</text><text x="1894" y="1029" font-size="8" font-weight="bold" fill="#111" text-anchor="middle">z</text>
</svg>
</body>
</html>
